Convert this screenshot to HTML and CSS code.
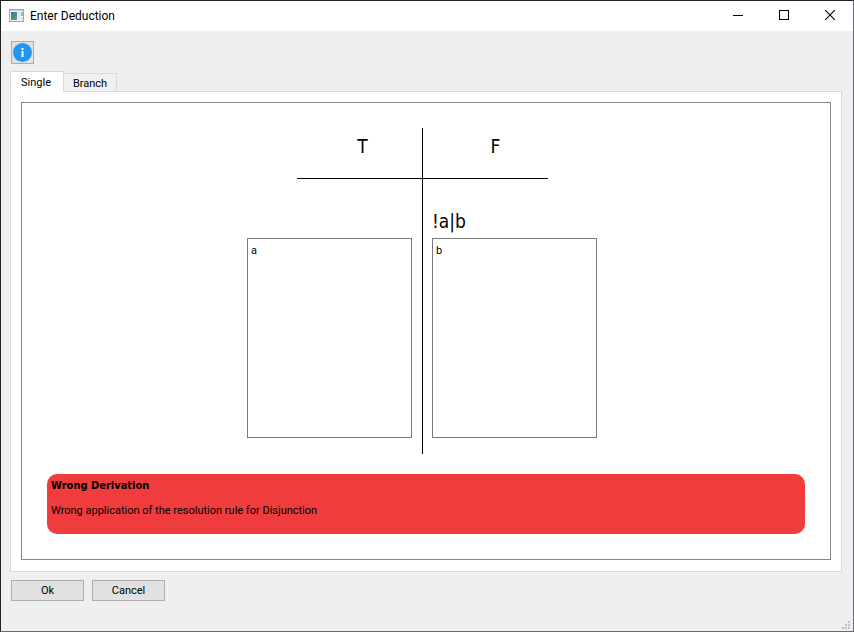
FILE: index.html
```html
<!DOCTYPE html>
<html lang="en">
<head>
<meta charset="utf-8">
<title>Enter Deduction</title>
<link rel="stylesheet" href="styles.css">
</head>
<body>
<div class="window">
  <header class="titlebar">
    <svg class="app-icon" width="16" height="14" viewBox="0 0 16 14" aria-hidden="true">
      <defs>
        <linearGradient id="pane" x1="0" y1="0" x2="1" y2="1">
          <stop offset="0" stop-color="#3c6fa6"/>
          <stop offset="1" stop-color="#4fae7c"/>
        </linearGradient>
      </defs>
      <rect x="0.5" y="0.5" width="14" height="12" fill="#f4f4f4" stroke="#a3a7ab"/>
      <path d="M1 1.5h13" stroke="#c9cdd0"/>
      <rect x="2" y="3" width="6" height="8" fill="url(#pane)"/>
      <rect x="9" y="3" width="2" height="8" fill="#dfe3e6"/>
      <rect x="12" y="3" width="2" height="4" fill="#8dbfae"/>
      <rect x="12" y="8" width="2" height="3" fill="#dfe3e6"/>
    </svg>
    <h1 class="title">Enter Deduction</h1>
    <div class="window-controls">
      <button class="control" type="button" aria-label="Minimize">
        <svg width="10" height="10" viewBox="0 0 10 10" shape-rendering="crispEdges"><path d="M0 5.5h10" stroke="#000"/></svg>
      </button>
      <button class="control" type="button" aria-label="Maximize">
        <svg width="10" height="10" viewBox="0 0 10 10" shape-rendering="crispEdges"><rect x="0.5" y="0.5" width="9" height="9" fill="none" stroke="#000"/></svg>
      </button>
      <button class="control" type="button" aria-label="Close">
        <svg width="10" height="10" viewBox="0 0 10 10"><path d="M0 0L10 10M10 0L0 10" stroke="#000" stroke-width="1.1"/></svg>
      </button>
    </div>
  </header>

  <main class="content">
    <button class="info" type="button" aria-label="Information">
      <svg width="19" height="19" viewBox="0 0 19 19">
        <circle cx="9.5" cy="9.5" r="9.5" fill="#2196f3"/>
        <path d="M8.5 5h2v2h-2zM8.5 8h2v6h-2z" fill="#fff"/>
      </svg>
    </button>

    <div class="tabs" role="tablist">
      <button class="tab tab-active" type="button" role="tab" aria-selected="true">Single</button>
      <button class="tab" type="button" role="tab" aria-selected="false">Branch</button>
    </div>

    <section class="pane" role="tabpanel">
      <div class="frame">
        <div class="board">
          <div class="side side-true">
            <label class="heading" for="true-input">T</label>
            <div class="formula"></div>
            <textarea class="entry" id="true-input" spellcheck="false">a</textarea>
          </div>
          <div class="side side-false">
            <label class="heading" for="false-input">F</label>
            <div class="formula">!a|b</div>
            <textarea class="entry" id="false-input" spellcheck="false">b</textarea>
          </div>
        </div>

        <div class="alert" role="alert">
          <strong>Wrong Derivation</strong>
          <p>Wrong application of the resolution rule for Disjunction</p>
        </div>
      </div>
    </section>

    <div class="actions">
      <button class="button" type="button">Ok</button>
      <button class="button" type="button">Cancel</button>
    </div>
  </main>

  <footer class="statusbar">
    <svg width="8" height="8" viewBox="0 0 8 8" fill="#bfbfbf" shape-rendering="crispEdges" aria-hidden="true">
      <path d="M6 0h2v2h-2zM3 3h2v2h-2zM6 3h2v2h-2zM0 6h2v2h-2zM3 6h2v2h-2zM6 6h2v2h-2z"/>
    </svg>
  </footer>
</div>
</body>
</html>
```

FILE: styles.css
```css
* {
  box-sizing: border-box;
}

body {
  margin: 0;
  color: #000;
  font: 11px/14px Tahoma, Roboto, sans-serif;
}

button,
textarea {
  color: inherit;
  font: inherit;
}

svg {
  display: block;
}

.window {
  display: flex;
  flex-direction: column;
  min-height: 100vh;
  border: 1px solid #66686b;
  border-top-color: #232023;
  border-left-color: #232023;
  background: #efefef;
}

.titlebar {
  display: flex;
  align-items: center;
  height: 30px;
  padding-left: 8px;
  background: #fff;
}

.title {
  flex: 1;
  margin: 0 0 0 5px;
  font: 12px/16px "Segoe UI", Roboto, sans-serif;
}

.window-controls {
  display: flex;
  align-self: flex-start;
}

.control {
  display: grid;
  place-items: center;
  width: 46px;
  height: 28px;
  padding: 0;
  border: 0;
  background: none;
}

.content {
  display: flex;
  flex: 1;
  flex-direction: column;
  padding: 10px 11px 0 9px;
}

.info {
  display: grid;
  place-items: center;
  width: 23px;
  height: 23px;
  margin: 0 0 7px 1px;
  padding: 0;
  border: 1px solid #adadad;
  background: #e1e1e1;
}

.tabs {
  display: flex;
  align-items: flex-end;
}

.tab {
  width: 53px;
  height: 18px;
  padding: 2px 0 0;
  border: 1px solid #d9d9d9;
  border-width: 1px 1px 0 0;
  background: #f0f0f0;
}

.tab-active {
  z-index: 1;
  width: 54px;
  height: 21px;
  margin-bottom: -1px;
  padding-right: 2px;
  border-left-width: 1px;
  background: #fff;
}

.pane {
  display: flex;
  flex: 1;
  padding: 10px 10px 11px;
  border: 1px solid #d9d9d9;
  background: #fff;
}

.frame {
  display: flex;
  flex: 1;
  flex-direction: column;
  padding: 25px;
  border: 1px solid #828790;
}

.board {
  display: flex;
  justify-content: center;
  padding-right: 8px;
}

.side {
  width: 175px;
  padding-bottom: 16px;
}

.side-true {
  padding-right: 10px;
}

.side-false {
  padding-left: 9px;
  border-left: 1px solid #000;
}

.heading,
.formula {
  font: 19px/24px "DejaVu Sans Condensed", sans-serif;
}

.heading {
  display: block;
  width: 125px;
  height: 51px;
  padding-top: 6px;
  border-bottom: 1px solid #000;
  text-align: center;
}

.side-true .heading {
  margin-left: 50px;
  padding-left: 6px;
}

.side-false .heading {
  margin-left: -9px;
  padding-left: 20px;
}

.formula {
  height: 59px;
  padding-top: 30px;
}

.entry {
  display: block;
  width: 165px;
  height: 200px;
  padding: 5px 3px;
  border: 1px solid #7a7a7a;
  background: #fff;
  resize: none;
}

.alert {
  min-height: 60px;
  margin-top: auto;
  padding: 5px 4px;
  border-radius: 10px;
  background: #f03c3c;
}

.alert strong {
  display: block;
  font-family: "DejaVu Sans Condensed", sans-serif;
}

.alert p {
  margin: 11px 0 0;
}

.actions {
  display: flex;
  gap: 8px;
  padding: 8px 0 0 1px;
}

.button {
  width: 73px;
  height: 21px;
  padding: 0;
  border: 1px solid #adadad;
  background: #e1e1e1;
}

.statusbar {
  display: flex;
  align-items: flex-end;
  justify-content: flex-end;
  height: 30px;
  padding: 0 3px 2px 0;
}
```
